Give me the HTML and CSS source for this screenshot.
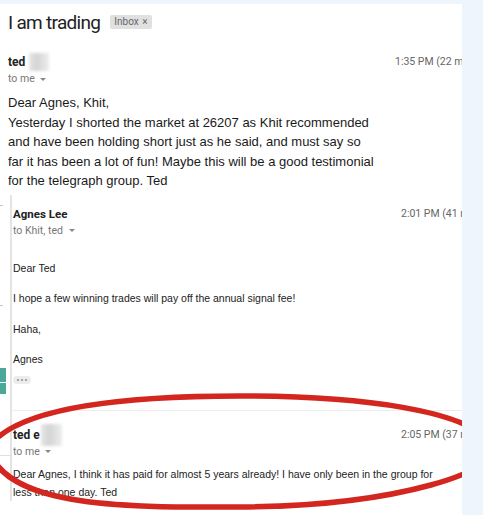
FILE: index.html
```html
<!DOCTYPE html>
<html>
<head>
<meta charset="utf-8">
<link rel="stylesheet" href="styles.css">
</head>
<body>
<div class="page">
  <div class="panel">
    <div class="subject">
      <h1 class="title">I am trading</h1>
      <span class="label">Inbox <span class="x">×</span></span>
    </div>
    <div class="msg msg-first">
      <div class="head">
        <div class="who">
          <div class="name">ted <span class="blur"></span></div>
          <div class="to">to me <span class="caret"></span></div>
        </div>
        <div class="time time-first">1:35 PM (22 minutes ago)</div>
      </div>
      <div class="body-big">
        Dear Agnes, Khit,<br>
        Yesterday I shorted the market at 26207 as Khit recommended<br>
        and have been holding short just as he said, and must say so<br>
        far it has been a lot of fun! Maybe this will be a good testimonial<br>
        for the telegraph group. Ted
      </div>
    </div>
    <div class="quoted">
      <div class="rail">
        <span class="tick tick-a"></span>
        <span class="tick tick-c"></span>
        <span class="teal teal-a"></span>
        <span class="teal teal-b"></span>
        <span class="tick tick-b"></span>
      </div>
      <div class="thread">
        <div class="msg msg-reply">
          <div class="head">
            <div class="who">
              <div class="name">Agnes Lee</div>
              <div class="to">to Khit, ted <span class="caret"></span></div>
            </div>
            <div class="time">2:01 PM (41 minutes ago)</div>
          </div>
          <div class="body-small">
            <p>Dear Ted</p>
            <p>I hope a few winning trades will pay off the annual signal fee!</p>
            <p>Haha,</p>
            <p class="last-p">Agnes</p>
          </div>
          <div class="dots" aria-label="Show trimmed content"><span class="dot"></span><span class="dot"></span><span class="dot"></span></div>
        </div>
        <div class="msg msg-last">
          <div class="head">
            <div class="who">
              <div class="name">ted e<span class="blur blur-b"></span></div>
              <div class="to">to me <span class="caret"></span></div>
            </div>
            <div class="time">2:05 PM (37 minutes ago)</div>
          </div>
          <div class="body-last">Dear Agnes, I think it has paid for almost 5 years already! I have only been in the group for less than one day. Ted</div>
        </div>
      </div>
    </div>
    <svg class="ring" width="462" height="515" viewBox="0 0 462 515">
      <path d="M -12 448 C 15 408, 120 396, 240 396 C 360 396, 470 410, 492 445 C 505 470, 400 506, 240 507 C 110 508, 5 505, -12 448 Z" fill="none" stroke="#d3261f" stroke-width="5.5" stroke-linejoin="round"/>
    </svg>
  </div>
  <div class="side"></div>
</div>
</body>
</html>
```

FILE: styles.css
```css
html, body {
  margin: 0;
  padding: 0;
  background: #eef5fc;
}
.page {
  display: flex;
  width: 483px;
  height: 515px;
  padding-top: 4px;
  box-sizing: border-box;
  overflow: hidden;
}
.panel {
  position: relative;
  width: 462px;
  flex: 0 0 462px;
  background: #fff;
  overflow: hidden;
  font-family: "Liberation Sans", Arial, sans-serif;
  color: #222;
}
.side {
  flex: 1;
}
.subject {
  display: flex;
  align-items: center;
  gap: 10px;
  padding: 3px 0 0 8px;
  height: 30px;
}
.title {
  margin: 0;
  font-family: Roboto, "Noto Sans", sans-serif;
  font-weight: 400;
  font-size: 19px;
  letter-spacing: -0.7px;
  color: #222;
}
.label {
  background: #e0e0e0;
  color: #666;
  font-family: Roboto, sans-serif;
  font-size: 10px;
  line-height: 14px;
  padding: 0 4px;
  border-radius: 2px;
}
.label .x {
  font-size: 10px;
  margin-left: 1px;
}
.msg {
  position: relative;
}
.head {
  display: flex;
  justify-content: space-between;
  align-items: flex-start;
}
.name {
  font-family: Roboto, sans-serif;
  font-weight: 700;
  font-size: 12px;
  line-height: 14px;
  color: #222;
  display: flex;
  align-items: center;
}
.msg-reply .name {
  font-size: 11.5px;
}
.blur {
  display: inline-block;
  width: 20px;
  height: 18px;
  margin: -2px 0 -2px 4px;
  background: linear-gradient(90deg, #e6e6e6, #d4d4d4 40%, #ededed);
  filter: blur(1.5px);
}
.blur-b {
  margin: -4px 0 -4px 1px;
  width: 21px;
  height: 22px;
}
.to {
  font-family: Roboto, sans-serif;
  font-size: 10.5px;
  line-height: 13px;
  color: #777;
  margin-top: 3px;
}
.caret {
  display: inline-block;
  width: 0;
  height: 0;
  border-left: 3px solid transparent;
  border-right: 3px solid transparent;
  border-top: 3px solid #888;
  vertical-align: middle;
  margin-left: 3px;
}
.time {
  font-family: Roboto, sans-serif;
  font-size: 10.5px;
  line-height: 14px;
  color: #666;
  white-space: nowrap;
  width: 61px;
  flex: 0 0 61px;
}
.time-first {
  width: 67px;
  flex: 0 0 67px;
}
.msg-first {
  padding: 18px 0 0 8px;
}
.msg-first .head {
  height: 36px;
}
.body-big {
  font-size: 13px;
  line-height: 19.5px;
  color: #1a1a1a;
  padding-top: 2px;
}
.quoted {
  display: flex;
  margin-top: 4px;
}
.rail {
  position: relative;
  width: 10px;
  flex: 0 0 10px;
  border-right: 2px solid #e4e4e4;
}
.teal {
  display: block;
  position: absolute;
  left: 0;
  width: 6px;
  background: #4aa79a;
}
.teal-a { top: 173px; height: 14px; }
.teal-b { top: 188px; height: 11px; }
.tick {
  position: absolute;
  left: 0;
  width: 3px;
  height: 1px;
  background: #c8c8c8;
}
.tick-a { top: 10px; }
.tick-c { top: 110px; }
.tick-b { top: 260px; width: 10px; background: #e0e0e0; }
.thread {
  flex: 1;
  padding-left: 1px;
}
.msg-reply {
  padding: 12px 0 0 0;
  border-bottom: 1px solid #ececec;
  height: 216px;
  box-sizing: border-box;
}
.body-small {
  font-size: 10.5px;
  color: #222;
  padding-top: 24px;
}
.body-small p {
  margin: 0 0 16.5px 0;
  line-height: 14px;
}
.body-small .last-p {
  margin-bottom: 0;
}
.dots {
  display: flex;
  align-items: center;
  justify-content: center;
  gap: 2px;
  width: 18px;
  height: 8px;
  margin-top: 10px;
  background: #ececec;
  border-radius: 4px;
}
.dot {
  width: 2px;
  height: 2px;
  border-radius: 50%;
  background: #8e8e8e;
}
.msg-last {
  padding-top: 17px;
}
.body-last {
  font-size: 10.5px;
  line-height: 18px;
  color: #222;
  padding-top: 7px;
  max-width: 425px;
}
.ring {
  position: absolute;
  left: 0;
  top: -4px;
  pointer-events: none;
}
```
